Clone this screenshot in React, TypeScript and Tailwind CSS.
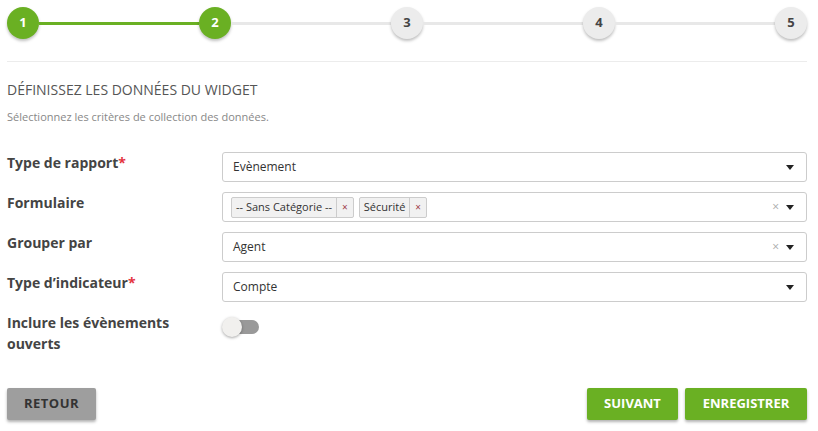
import { Fragment } from 'react';

const font = { fontFamily: '"Open Sans", "Liberation Sans", sans-serif' };

/* ===== Stepper ===== */
function Step({ n, done }: { n: number; done: boolean }) {
  return (
    <div
      className={[
        'w-8 h-8 rounded-full flex items-center justify-center shrink-0 text-[13px] font-bold shadow-[0_2px_3px_rgba(0,0,0,0.25)]',
        done ? 'bg-[#6ab023] text-white' : 'bg-[#ececec] text-[#444]',
      ].join(' ')}
    >
      {n}
    </div>
  );
}

function Stepper() {
  const current = 2;
  return (
    <div className="flex items-center pt-[7px] pb-[22px] border-b border-[#ececec]">
      {[1, 2, 3, 4, 5].map((n) => (
        <Fragment key={n}>
          {n > 1 && <div className={['flex-1 h-[3px]', n <= current ? 'bg-[#6ab023]' : 'bg-[#e8e8e8]'].join(' ')} />}
          <Step n={n} done={n <= current} />
        </Fragment>
      ))}
    </div>
  );
}

function Caret() {
  return <span className="w-0 h-0 border-l-[4px] border-r-[4px] border-t-[5px] border-l-transparent border-r-transparent border-t-[#222]" />;
}

function Select({ children, clear }: { children: React.ReactNode; clear?: boolean }) {
  return (
    <div className="flex-1 h-[30px] border border-[#ccc] rounded-[3px] flex items-center pl-[10px] pr-[12px] text-[12px] text-[#333]">
      <div className="flex-1 flex items-center gap-[5px]">{children}</div>
      {clear && <span className="text-[12px] text-[#aaa] mr-[7px] leading-none">×</span>}
      <Caret />
    </div>
  );
}

function Chip({ label }: { label: string }) {
  return (
    <span className="flex items-center h-[21px] border border-[#ccc] bg-[#f1f1f1] rounded-[2px] text-[11px] text-[#333]">
      <span className="px-[4px]">{label}</span>
      <span className="border-l border-[#ccc] h-full flex items-center px-[5px] text-[10px] text-[#a0404a]">×</span>
    </span>
  );
}

function Row({ label, required, children }: { label: React.ReactNode; required?: boolean; children: React.ReactNode }) {
  return (
    <div className="flex items-start">
      <div className="w-[215px] shrink-0 text-[14px] font-bold text-[#444] leading-[21px]">
        {label}
        {required && <span className="text-[#e4343f]">*</span>}
      </div>
      {children}
    </div>
  );
}

export default function App() {
  return (
    <div className="w-[818px] h-[431px] bg-white pl-[7px] pr-[11px]" style={font}>
      <Stepper />

      <h2 className="mt-[18px] text-[14px] leading-[20px] text-[#555] uppercase">Définissez les données du widget</h2>
      <p className="mt-[9px] text-[11px] leading-[16px] text-[#888]">Sélectionnez les critères de collection des données.</p>

      <div className="mt-[27px] flex flex-col gap-[10px]">
        <Row label="Type de rapport" required>
          <Select>Evènement</Select>
        </Row>
        <Row label="Formulaire">
          <Select clear>
            <span className="-ml-[2px] flex gap-[5px]">
              <Chip label="-- Sans Catégorie --" />
              <Chip label="Sécurité" />
            </span>
          </Select>
        </Row>
        <Row label="Grouper par">
          <Select clear>Agent</Select>
        </Row>
        <Row label="Type d’indicateur" required>
          <Select>Compte</Select>
        </Row>
        <Row label={<>Inclure les évènements<br />ouverts</>}>
          <div className="relative mt-[5px] w-[40px] h-[20px] flex items-center">
            <div className="absolute left-[7px] w-[30px] h-[14px] rounded-full bg-[#999]" />
            <div className="absolute left-0 w-[20px] h-[20px] rounded-full bg-[#f1f0ee] shadow-[0_1px_3px_rgba(0,0,0,0.35)]" />
          </div>
        </Row>
      </div>

      <div className="mt-[34px] flex items-center">
        <button className="w-[89px] h-[32px] rounded-[2px] bg-[#9e9e9e] text-[#333] text-[13px] font-bold tracking-[0.5px] shadow-[0_2px_3px_rgba(0,0,0,0.3)]">
          RETOUR
        </button>
        <div className="flex-1" />
        <button className="w-[91px] h-[32px] rounded-[2px] bg-[#6ab023] text-white text-[13px] font-bold shadow-[0_2px_3px_rgba(0,0,0,0.3)]">
          SUIVANT
        </button>
        <button className="ml-[7px] w-[122px] h-[32px] rounded-[2px] bg-[#6ab023] text-white text-[13px] font-bold shadow-[0_2px_3px_rgba(0,0,0,0.3)]">
          ENREGISTRER
        </button>
      </div>
    </div>
  );
}
